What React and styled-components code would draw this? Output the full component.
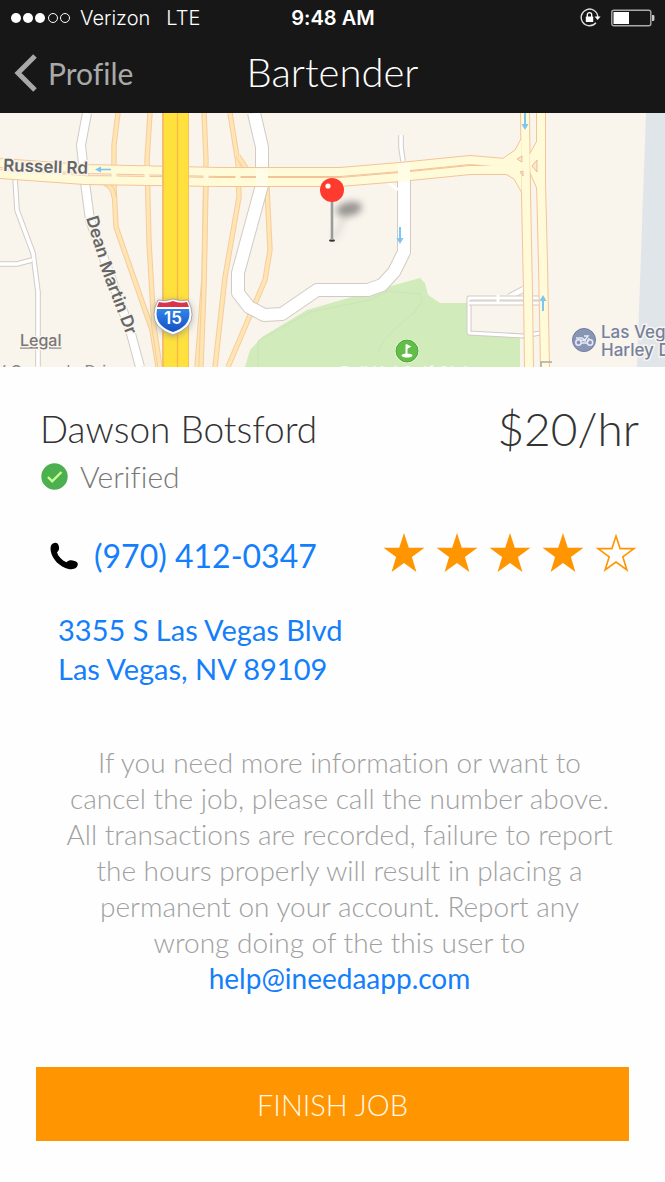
import React from 'react';
import styled, { createGlobalStyle } from 'styled-components';

const GlobalStyle = createGlobalStyle`
  * { box-sizing: border-box; }
  body { margin: 0; background: #fefefe; font-variant-ligatures: none; }
  body, button { font-family: Lato, "Open Sans", sans-serif; }
  h1, h2, p { margin: 0; font-weight: 300; }
`;

const Screen = styled.div`
  display: flex;
  flex-direction: column;
`;

const Header = styled.header`
  background: #171717;
  color: #fff;
`;

const StatusBar = styled.div`
  display: grid;
  grid-template-columns: 1fr auto 1fr;
  align-items: center;
  height: 36px;
  padding: 0 10px 0 11px;
  font-family: Inter, sans-serif;
  font-size: 20px;
`;

const Carrier = styled.div`
  display: flex;
  align-items: center;
  gap: 8px;
  font-weight: 300;
`;

const Network = styled.span`
  padding-left: 8px;
`;

const StatusIcons = styled.div`
  display: flex;
  align-items: center;
  justify-content: flex-end;
  gap: 10px;
`;

const Time = styled.time`
  font-weight: 600;
`;

const NavBar = styled.nav`
  display: grid;
  grid-template-columns: 1fr auto 1fr;
  align-items: center;
  height: 77px;
  padding: 0 14px 4px;
`;

const BackButton = styled.button`
  display: flex;
  align-items: center;
  justify-self: start;
  gap: 10px;
  padding: 0;
  border: 0;
  background: none;
  color: #a9a9a9;
  font-size: 30px;
  line-height: 36px;
  font-variant-ligatures: none;
  cursor: pointer;
`;

const Title = styled.h1`
  padding-bottom: 2px;
  font-size: 40px;
  line-height: 44px;
`;

const MapView = styled.section`
  height: 254px;
  background: #f9f4ec;
  overflow: hidden;

  svg { display: block; width: 100%; height: 100%; }
`;

const Details = styled.main`
  display: flex;
  flex-direction: column;
  padding: 35px 36px 38px;
`;

const SplitRow = styled.div`
  display: flex;
  justify-content: space-between;
  align-items: center;
`;

const Name = styled.h2`
  padding-left: 4px;
  color: #333;
  font-size: 37px;
  line-height: 54px;
`;

const Rate = styled.p`
  margin-right: -10px;
  color: #333;
  font-size: 46px;
  line-height: 54px;
`;

const Verified = styled.p`
  display: flex;
  align-items: center;
  gap: 12px;
  padding-left: 5px;
  color: #777;
  font-size: 30px;
  line-height: 40px;
`;

const ContactRow = styled(SplitRow)`
  margin-top: 37px;
  padding-left: 14px;
`;

const PhoneLink = styled.a`
  display: flex;
  align-items: center;
  gap: 16px;
  color: #147efb;
  font-size: 32px;
  line-height: 42px;
  text-decoration: none;
`;

const Stars = styled.div`
  display: flex;
  gap: 11px;
  margin-right: -8px;
  padding-bottom: 6px;
`;

const Address = styled.a`
  align-self: flex-start;
  margin-top: 31px;
  padding-left: 22px;
  color: #147efb;
  font-size: 29px;
  line-height: 39px;
  text-decoration: none;
`;

const Notice = styled.p`
  margin-top: 56px;
  padding: 0 8px 0 22px;
  color: #a0a0a0;
  font-size: 28px;
  line-height: 36px;
  text-align: center;

  a { color: #147efb; font-weight: 400; text-decoration: none; }
`;

const FinishButton = styled.button`
  margin-top: 71px;
  height: 74px;
  border: 0;
  background: #ff9500;
  color: #fff8e6;
  font-size: 29px;
  font-weight: 300;
  cursor: pointer;
`;

const SignalDots = () => (
  <svg width="61" height="12" viewBox="0 0 61 12" aria-label="Signal 3 of 5">
    {[5, 17, 29].map((x) => <circle key={x} cx={x} cy="6" r="5" fill="#fff" />)}
    {[42, 54].map((x) => (
      <circle key={x} cx={x} cy="6" r="4.5" fill="none" stroke="#fff" />
    ))}
  </svg>
);

const RotationLock = () => (
  <svg width="21" height="20" viewBox="0 0 21 20" fill="none" aria-label="Rotation lock">
    <path d="M15.9 14.7A8.3 8.3 0 1 1 17.8 9" stroke="#ddd" strokeWidth="1.4" />
    <path d="M14.6 8.6h6L17.6 12z" fill="#fff" />
    <rect x="5.8" y="8.6" width="7.4" height="5.4" rx=".6" fill="#fff" />
    <path d="M7.3 9V6.8a2.2 2.2 0 0 1 4.4 0V9" stroke="#fff" strokeWidth="1.3" />
  </svg>
);

const Battery = () => (
  <svg width="44" height="18" viewBox="0 0 44 18" fill="none" aria-label="Battery">
    <rect x=".8" y="1.2" width="39" height="15.6" rx="2" stroke="#aaa" strokeWidth="1.4" />
    <rect x="2.5" y="3" width="15.5" height="12" fill="#fff" />
    <path d="M41 6h1.2q1.2 0 1.2 1v4q0 1-1.2 1H41z" fill="#ccc" />
  </svg>
);

const CheckBadge = () => (
  <svg width="27" height="27" viewBox="0 0 27 27" fill="none" aria-hidden="true">
    <circle cx="13.5" cy="13.5" r="13.2" fill="#4caf50" />
    <path d="M7 14l4.2 4.3L20.5 9" stroke="#ccff90" strokeWidth="2.4" />
  </svg>
);

const PhoneIcon = () => (
  <svg width="28" height="28" viewBox="0 0 28 28" aria-hidden="true">
    <path
      d="M1.2 3.2C2.4.8 5.8-.1 7.5 1.5c1.5 1.5 2.2 5.2 1 7L7 10.4c1.3 4 4.8 7.7 9.4 9.8 1.2-.8 2.2-1.7 3.8-1.9 2.4-.3 5.6.7 7 2.2 1.2 1.4.4 4.2-1.5 5.6-1.5 1.1-4.2 1.5-7.2.8C9.8 25 2.2 17.2.8 9.2.4 6.6.4 4.8 1.2 3.2Z"
      fill="#000"
    />
  </svg>
);

const Star = ({ filled }) => (
  <svg width="42" height="40" viewBox="0 0 42 40" aria-hidden="true">
    <path
      d={filled
        ? 'M21 0L25.8 14.8H41.5L28.9 24.1L33.4 39L21 29.9L8.6 39L13.1 24.1L.5 14.8H16.2Z'
        : 'M21 3L25.1 15.6H39L27.8 23.8L31.9 37L21 29L10.1 37L14.2 23.8L3 15.6H16.9Z'}
      fill={filled ? '#ff9500' : 'none'}
      stroke={filled ? 'none' : '#ff9500'}
      strokeWidth="1.6"
    />
  </svg>
);

const Road = ({ d, width, fill, edge }) => (
  <g fill="none" strokeLinejoin="round">
    <path d={d} stroke={edge} strokeWidth={width + 2} />
    <path d={d} stroke={fill} strokeWidth={width} />
  </g>
);

const white = { fill: '#fff', edge: '#d0cbc6' };
const ramp = { fill: '#fee5b2', edge: '#f6cd9e', width: 3.4 };
const yellowFill = '#fffbd8';
const yellowEdge = '#f4c498';

const ramps = [
  'M118 0L114 32V74L116 114L152 217L158 254',
  'M150 0L147 47L149 130L154 214L160 254',
  'M204 0L206 47L204 164L197 254',
  'M206 70L204 174L201 254',
  'M230 0L238 50L239 84L225 164L215 254',
  'M238 43L246 55',
  'M104 70Q113 73 114 84',
  'M267 74L270 137L265 167L228 254',
];

const arterials = [
  'M0 50L85 56L220 59H340L400 54L470 47L505 50L526 54',
  'M0 61L85 67L220 69H340L400 64L470 57L505 57L526 58',
  'M525 0L526 80L528 180L529 254',
  'M541 0L541 70L543 150L545 254',
];

const MapDrawing = () => (
  <svg viewBox="0 0 665 254" preserveAspectRatio="xMidYMid slice" role="img" aria-label="Map of the job location">
    <defs>
      <filter id="soft" x="-50%" y="-50%" width="200%" height="200%">
        <feGaussianBlur stdDeviation="3.5" />
      </filter>
      <linearGradient id="shield" x1="0" y1="0" x2="0" y2="1">
        <stop offset="0" stopColor="#3183ea" />
        <stop offset="1" stopColor="#1552c4" />
      </linearGradient>
    </defs>

    <path d="M646 0L637 254H665V0Z" fill="#e0e5ea" />
    <path d="M245 254L250 237L262 224L307 197L352 184L395 172L420 165L425 170L428 182L440 190H467V222H520V254Z" fill="#d1ebba" />
    <path d="M258 254V228L310 199L370 187L388 178L420 181L422 188L414 200L398 213L384 227L378 240" fill="none" stroke="#cde3bc" />

    <Road {...white} width={3.6} d="M15 64L17 97L33 140L38 179V254" />
    <Road {...white} width={3.6} d="M0 151H17L32 147" />
    <Road {...white} width={8} d="M87 0L81 32L85 69L90 107L130 217L140 254" />
    {ramps.map((d) => <Road key={d} {...ramp} d={d} />)}
    <Road {...white} width={3.6} d="M401 22V34L403 48" />
    <Road {...white} width={12} d="M254 0L262 34V72L238 160V180L249 194L264 202L282 201L317 177H368L382 172L394 159L404 139V52" />
    <path d="M389 70L398 77" stroke="#fff" strokeWidth="3" />
    <Road {...white} width={5} d="M509 184L524 176" />
    <Road {...white} width={3} d="M540 185H469V220L524 223L540 220" />
    <Road {...white} width={3} d="M469 190H540" />
    <path d="M498 182V191" stroke="#fff" strokeWidth="3" />

    <g fill="none" strokeLinejoin="round">
      {arterials.map((d) => <path key={d} d={d} stroke={yellowEdge} strokeWidth="10" />)}
      <path d="M502 46L515 37L522 24V80L514 66L504 60ZM529 42L538 26V78L530 60Z" fill={yellowFill} stroke={yellowEdge} />
      {arterials.map((d) => <path key={d} d={d} stroke={yellowFill} strokeWidth="8" />)}
      <path d="M517 46L522 43V49ZM532 53L537 47V59ZM520 59L523 63V58Z" fill="#f9e8cf" stroke="#efbd91" />
    </g>
    <path d="M114 53V70M147 53V72M206 55V73M238 55V73" stroke={yellowFill} strokeWidth="5" />
    <path d="M262 56V73M404 50V69" stroke="#fffde8" strokeWidth="12" />

    <path d="M162 0H189V254H162Z" fill="#f3bf69" />
    <path d="M164 0H188V254H164Z" fill="#ffe13e" />
    <path d="M177.5 0V254" stroke="#f4ba49" strokeWidth="1.4" />
    <path d="M541 254V249H552" fill="none" stroke="#aaa" strokeWidth="1.5" />

    <g fill="#7cc6f3" stroke="#7cc6f3">
      <path d="M111 56.500H98" strokeWidth="1.6" /><path d="M95 56.500L101 53.500V59.500Z" stroke="none" />
      <path d="M400 114V126" strokeWidth="2" /><path d="M400 131L396.500 125H403.500Z" stroke="none" />
      <path d="M525 0V12" strokeWidth="2" /><path d="M525 17L521.500 11H528.500Z" stroke="none" />
      <path d="M543 198V187" strokeWidth="2" /><path d="M543 182L539.500 188H546.500Z" stroke="none" />
    </g>

    <g fontFamily="Inter, sans-serif" fontWeight="600" fill="#666" stroke="#f9f4ec" strokeWidth="3" paintOrder="stroke">
      <text x="3" y="58" fontSize="17" transform="rotate(2 3 58)">Russell Rd</text>
      <text x="0" y="0" fontSize="17" transform="translate(86 105) rotate(73)">Dean</text>
      <text x="0" y="0" fontSize="17" transform="translate(99 151) rotate(69)">Martin Dr</text>
      <text x="20" y="233" fontSize="16" fontWeight="500" fill="#777" textDecoration="underline">Legal</text>
      <text x="-10" y="264" fontSize="16" fontWeight="400" fill="#888">W Oquendo Drive</text>
      <text x="340" y="265" fontSize="16" fill="#f2f9eb" stroke="none">Bali Hai Golf Club</text>
      <text x="601" y="225" fontSize="17" fontWeight="500" fill="#7481a0">Las Vegas</text>
      <text x="601" y="243" fontSize="17" fontWeight="500" fill="#7481a0">Harley Davidson</text>
    </g>

    <path d="M157 190Q164 188 173 187Q182 188 189 190Q196 207 187 216Q181 222 173 224Q165 222 159 216Q150 207 157 190Z" fill="#777" opacity=".5" filter="url(#soft)" />
    <path d="M158 187Q165 189 173 186Q181 189 188 187Q196 203 188 213Q182 219 173 222Q164 219 158 213Q150 203 158 187Z" fill="#fff" stroke="#999" strokeWidth=".8" />
    <path d="M159 189Q166 191 173 188Q180 191 187 189L189 194H157Z" fill="#d9344c" />
    <path d="M157 196H189Q191 206 185 212Q180 217 173 219Q166 217 161 212Q155 206 157 196Z" fill="url(#shield)" />
    <text x="173" y="211" textAnchor="middle" fontFamily="Inter, sans-serif" fontSize="17" fontWeight="600" fill="#fff">15</text>

    <ellipse cx="349" cy="96" rx="13" ry="7" fill="#555" opacity=".6" filter="url(#soft)" transform="rotate(-12 349 96)" />
    <path d="M334 126L345 103" stroke="#777" strokeWidth="4" opacity=".25" filter="url(#soft)" />
    <ellipse cx="332" cy="127.500" rx="3" ry="1.300" fill="#333" />
    <path d="M332 88V127" stroke="#9b9b9b" strokeWidth="2.6" />
    <circle cx="332" cy="77" r="12" fill="#ff3b30" />
    <circle cx="328" cy="73" r="2.600" fill="#fff" />

    <circle cx="407" cy="238" r="12" fill="#fff" opacity=".8" />
    <circle cx="407" cy="238" r="11" fill="#62bd49" stroke="#4ea93a" />
    <path d="M406.500 242V231.500" stroke="#fff" strokeWidth="2" />
    <path d="M406 231L411.500 233.500L407 236Z" fill="#fff" />
    <ellipse cx="407" cy="242.500" rx="5.500" ry="2" fill="#fff" />

    <circle cx="584" cy="227" r="11.500" fill="#8995b5" stroke="#717e9f" />
    <g fill="none" stroke="#e6ebf5" strokeWidth="1.5">
      <circle cx="578.500" cy="229.500" r="2.700" />
      <circle cx="590" cy="229.500" r="2.700" />
      <path d="M576 225H582L585 227L588 223H584M581 230H587L589 225M580 227L586 228" />
    </g>
  </svg>
);

export default function App() {
  return (
    <Screen>
      <GlobalStyle />
      <Header>
        <StatusBar>
          <Carrier>
            <SignalDots />
            <span>Verizon</span>
            <Network>LTE</Network>
          </Carrier>
          <Time>9:48 AM</Time>
          <StatusIcons>
            <RotationLock />
            <Battery />
          </StatusIcons>
        </StatusBar>
        <NavBar>
          <BackButton type="button">
            <svg width="24" height="38" viewBox="0 0 24 38" fill="none" aria-hidden="true">
              <path d="M21 2L4 19L21 36" stroke="#a9a9a9" strokeWidth="5" />
            </svg>
            Profile
          </BackButton>
          <Title>Bartender</Title>
        </NavBar>
      </Header>
      <MapView><MapDrawing /></MapView>
      <Details>
        <SplitRow>
          <Name>Dawson Botsford</Name>
          <Rate>$20/hr</Rate>
        </SplitRow>
        <Verified><CheckBadge />Verified</Verified>
        <ContactRow>
          <PhoneLink href="tel:+19704120347"><PhoneIcon />(970) 412-0347</PhoneLink>
          <Stars role="img" aria-label="4 out of 5 stars">
            {[1, 2, 3, 4, 5].map((n) => <Star key={n} filled={n <= 4} />)}
          </Stars>
        </ContactRow>
        <Address href="#map">3355 S Las Vegas Blvd<br />Las Vegas, NV 89109</Address>
        <Notice>
          If you need more information or want to<br />
          cancel the job, please call the number above.<br />
          All transactions are recorded, failure to report<br />
          the hours properly will result in placing a<br />
          permanent on your account. Report any<br />
          wrong doing of the this user to<br />
          <a href="mailto:help@ineedaapp.com">help@ineedaapp.com</a>
        </Notice>
        <FinishButton type="button">FINISH JOB</FinishButton>
      </Details>
    </Screen>
  );
}
